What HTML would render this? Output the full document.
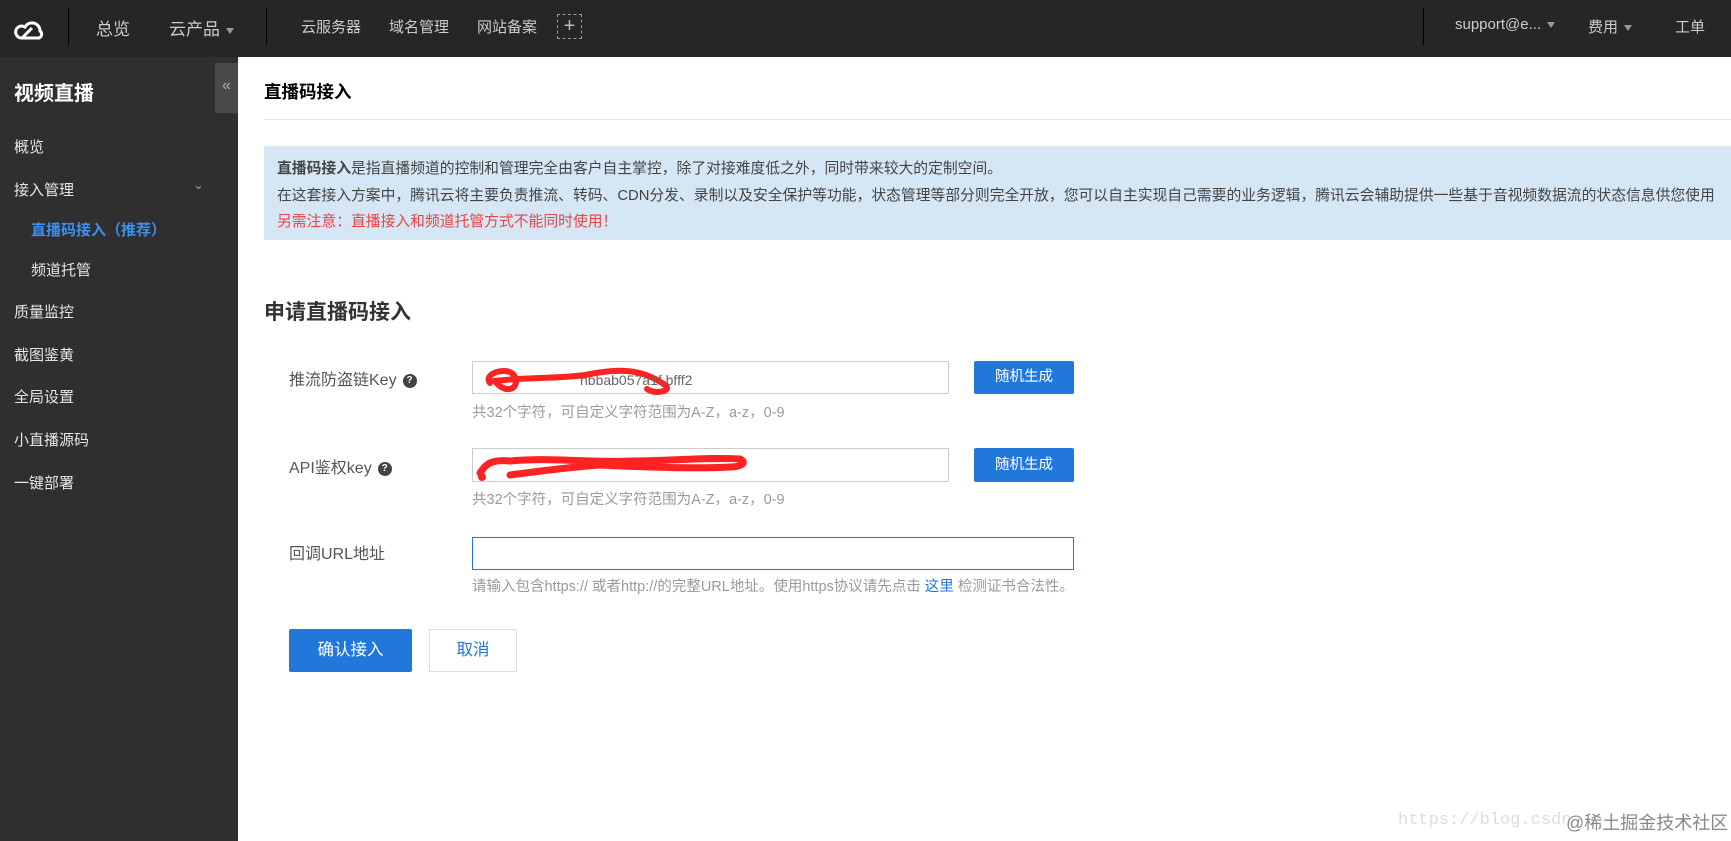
<!DOCTYPE html>
<html><head><meta charset="utf-8">
<style>
*{margin:0;padding:0;box-sizing:border-box}
body{width:1731px;height:841px;overflow:hidden;background:#fff;font-family:"Liberation Sans","Noto Sans CJK SC",sans-serif;position:relative}
.a{position:absolute;white-space:nowrap}
.hd{position:absolute;left:0;top:0;width:1731px;height:57px;background:#262626}
.hd .t{position:absolute;color:#ccc;font-size:15px;top:14px}
.vd{position:absolute;top:8px;width:1px;height:37px;background:#000}
.tri{display:inline-block;width:0;height:0;border-left:4px solid transparent;border-right:4px solid transparent;border-top:6px solid #999;margin-left:6px;vertical-align:middle}
.sb{position:absolute;left:0;top:57px;width:238px;height:784px;background:#2f2f2f}
.sb .m{position:absolute;left:14px;color:#e6e6e6;font-size:15px}
.lbl{color:#555;font-size:16px}
.inp{position:absolute;border:1px solid #ccc;background:#fff}
.btn{position:absolute;background:#2277da;color:#fff;font-size:14.5px;text-align:center;border-radius:2px}
.hint{color:#9a9a9a;font-size:14.5px}
.q{display:inline-block;width:14px;height:14px;border-radius:7px;background:#444;color:#fff;font-size:10px;text-align:center;line-height:14px;vertical-align:middle;margin-left:6px;font-weight:bold}
</style></head><body>
<div class="hd">
<svg class="a" style="left:13px;top:14px" width="32" height="28" viewBox="0 0 32 28"><path d="M9 24a6 6 0 1 1 3-11a8 8 0 0 1 15 4a4 4 0 0 1-1 7z" fill="none" stroke="#fff" stroke-width="3"/><path d="M9 24l10-10" stroke="#fff" stroke-width="3"/></svg>
<div class="vd" style="left:68px"></div>
<div class="t" style="left:96px;font-size:17px;top:15px">总览</div>
<div class="t" style="left:169px;font-size:17px;top:15px">云产品<span class="tri"></span></div>
<div class="vd" style="left:266px"></div>
<div class="t" style="left:301px;top:16px">云服务器</div>
<div class="t" style="left:389px;top:16px">域名管理</div>
<div class="t" style="left:477px;top:16px">网站备案</div>
<div class="a" style="left:557px;top:14px;width:25px;height:25px;border:1px dashed #999;color:#bbb;font-size:20px;text-align:center;line-height:22px">+</div>
<div class="vd" style="left:1423px"></div>
<div class="t" style="left:1455px;top:16px">support@e...<span class="tri"></span></div>
<div class="t" style="left:1588px;top:16px">费用<span class="tri"></span></div>
<div class="t" style="left:1675px;top:16px">工单</div>
</div>
<div class="sb">
<div class="a" style="left:215px;top:6px;width:23px;height:50px;background:#4a4a4a;color:#aaa;font-size:16px;text-align:center;line-height:46px">«</div>
<div class="m" style="top:20px;font-size:20px;font-weight:bold;color:#fff">视频直播</div>
<div class="m" style="top:79px">概览</div>
<div class="m" style="top:122px">接入管理</div>
<div class="a" style="left:193px;top:120px;color:#999;font-size:13px">⌄</div>
<div class="m" style="top:162px;left:31px;color:#3d8ff0;font-weight:bold">直播码接入（推荐）</div>
<div class="m" style="top:202px;left:31px">频道托管</div>
<div class="m" style="top:244px">质量监控</div>
<div class="m" style="top:287px">截图鉴黄</div>
<div class="m" style="top:329px">全局设置</div>
<div class="m" style="top:372px">小直播源码</div>
<div class="m" style="top:415px">一键部署</div>
</div>
<div class="a" style="left:264px;top:79px;font-size:17.5px;font-weight:bold;color:#000">直播码接入</div>
<div class="a" style="left:264px;top:119px;width:1467px;height:1px;background:#e5e5e5"></div>
<div class="a" style="left:264px;top:146px;width:1467px;height:94px;background:#d5e7f5"></div>
<div class="a" style="left:277px;top:156px;font-size:14.8px;color:#444;line-height:26.5px">
<b>直播码接入</b>是指直播频道的控制和管理完全由客户自主掌控，除了对接难度低之外，同时带来较大的定制空间。<br>
在这套接入方案中，腾讯云将主要负责推流、转码、CDN分发、录制以及安全保护等功能，状态管理等部分则完全开放，您可以自主实现自己需要的业务逻辑，腾讯云会辅助提供一些基于音视频数据流的状态信息供您使用<br>
<span style="color:#e54545">另需注意：直播接入和频道托管方式不能同时使用！</span></div>
<div class="a" style="left:264px;top:296px;font-size:21px;font-weight:bold;color:#333">申请直播码接入</div>
<div class="a lbl" style="left:289px;top:366px">推流防盗链Key<span class="q">?</span></div>
<div class="inp" style="left:472px;top:361px;width:477px;height:33px"></div>
<div class="btn" style="left:974px;top:361px;width:100px;height:33px;line-height:33px">随机生成</div>
<div class="a hint" style="left:472px;top:401px">共32个字符，可自定义字符范围为A-Z，a-z，0-9</div>
<div class="a lbl" style="left:289px;top:454px">API鉴权key<span class="q">?</span></div>
<div class="inp" style="left:472px;top:448px;width:477px;height:34px"></div>
<div class="btn" style="left:974px;top:448px;width:100px;height:34px;line-height:34px">随机生成</div>
<div class="a hint" style="left:472px;top:488px">共32个字符，可自定义字符范围为A-Z，a-z，0-9</div>
<svg class="a" style="left:470px;top:355px" width="300" height="140"><path d="M20 28c-8-10 20-18 25-6s-10 18-20 4c30-4 60-2 90-6 30-6 55-8 80 10 8 6-10 10-18 4" fill="none" stroke="#f22" stroke-width="6" stroke-linecap="round"/><text x="110" y="30" font-size="14" fill="#666" font-family="Liberation Sans">hbbab057a1f bfff2</text><path d="M10 118c5-8 10-14 30-12 40-4 80 2 120 0 40 0 80-4 110-2 8 4 0 8-10 8-40 2-90 0-130-2-30 2-60 6-90 10" fill="none" stroke="#f22" stroke-width="7" stroke-linecap="round"/><circle cx="12" cy="122" r="4" fill="#f22"/></svg>
<div class="a lbl" style="left:289px;top:540px">回调URL地址</div>
<div class="inp" style="left:472px;top:537px;width:602px;height:33px;border-color:#2277da"></div>
<div class="a hint" style="left:472px;top:575px">请输入包含https:// 或者http://的完整URL地址。使用https协议请先点击 <span style="color:#2277da">这里</span> 检测证书合法性。</div>
<div class="btn" style="left:289px;top:629px;width:123px;height:43px;line-height:43px;font-size:16.5px">确认接入</div>
<div class="a" style="left:429px;top:629px;width:88px;height:43px;border:1px solid #ddd;color:#2277da;font-size:16.5px;text-align:center;line-height:41px">取消</div>
<div class="a" style="left:1398px;top:811px;font-family:'Liberation Mono',monospace;font-size:17px;color:#ddd">https://blog.csdn</div>
<div class="a" style="left:1566px;top:809px;font-size:18px;color:#888">@稀土掘金技术社区</div>
</body></html>
